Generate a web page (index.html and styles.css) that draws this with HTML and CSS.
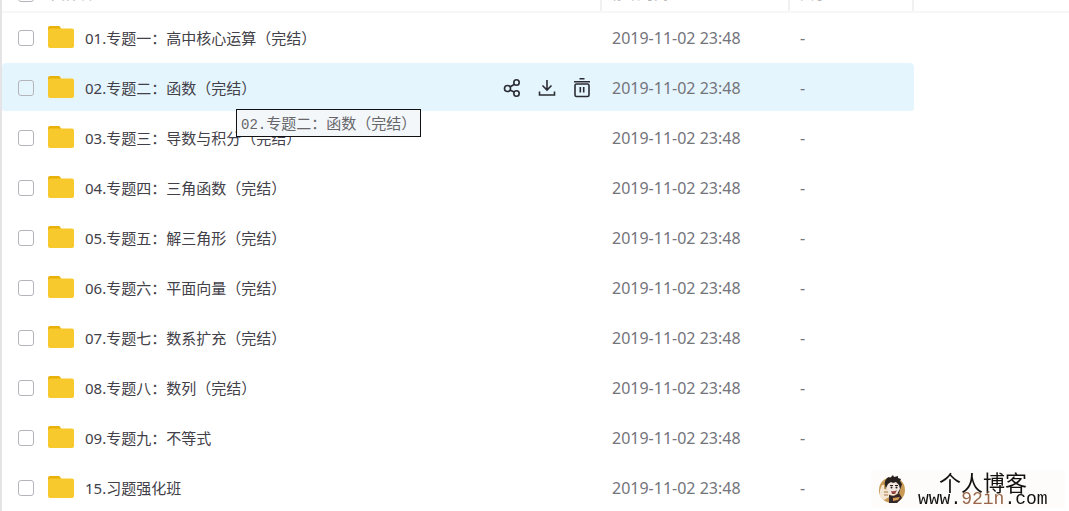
FILE: index.html
```html
<!DOCTYPE html>
<html lang="zh-CN">
<head>
<meta charset="utf-8">
<title>文件列表</title>
<link rel="stylesheet" href="styles.css">
</head>
<body>
<svg class="sprite" aria-hidden="true">
  <symbol id="folder" viewBox="0 0 26 22">
    <path d="M0 2a2 2 0 0 1 2-2h8.500a2 2 0 0 1 1.700 1l1.300 2.500V8H0z" fill="#e8b10a"/>
    <rect y="2.500" width="26" height="19.500" rx="2" fill="#f8c92c"/>
  </symbol>
</svg>
<main class="files">
  <div class="head-clip">
    <div class="head">
      <label class="name"><input type="checkbox" class="check"><span class="head-name">文件名</span></label>
      <span class="date">修改时间</span>
      <span class="size">大小</span>
    </div>
  </div>
  <ul class="list" id="list"></ul>
</main>
<footer class="mark">
  <svg class="mascot" viewBox="0 0 28 32" aria-hidden="true">
    <ellipse cx="14" cy="17" rx="13" ry="13" fill="#c99a55"/>
    <path d="M7 12c-1-3 1-7 4-8l1 1 3-3 1 2 4-1v2l3 1-1 2 2 3-1 3-2 6H9z" fill="#26201f"/>
    <path d="M10 11l3-2 2 1 3-1 3 3 1 4-3 5-5 2-5-3-1-5z" fill="#f2e6e0"/>
    <path d="M12 12.500h3M17 12.500h3" stroke="#26201f" fill="none"/>
    <circle cx="13.500" cy="14.500" r="1" fill="#26201f"/><circle cx="18.500" cy="14.500" r="1" fill="#26201f"/>
    <path d="M13 18q3 1 6-1l-2 4-3 0z" fill="#94413a"/>
    <path d="M11 22l5 1 5-3 3 5-5 5-8 0z" fill="#34282a"/>
    <path d="M2 17l2-5 2 0v4l5 1v7l-5 3-4-3z" fill="#f4e6d2"/>
    <path d="M6 19h4M6 22h4" stroke="#a87945" fill="none"/>
    <path d="M15 25l7-1-2 3-5 1z" fill="#d89b52"/>
  </svg>
  <div class="mark-text"><span class="mark-name">个人博客</span><span class="mark-url">www.<b>92in</b>.com</span></div>
</footer>
<script src="app.js"></script>
</body>
</html>
```
FILE: styles.css
```css
* { box-sizing: border-box; }
body { margin: 0; background: #fff; color: #424048; font: 15px/20px "Noto Sans", "Noto Sans CJK SC", sans-serif; }
.sprite { position: absolute; width: 0; height: 0; }
.files { min-height: 100vh; overflow: hidden; border-left: 2px solid #e4e4e6; }
.head-clip { display: flex; align-items: flex-end; height: 13px; border-bottom: 2px solid #f7f7f8; }
.head, .row { display: grid; grid-template-columns: minmax(0, 598px) 188px 126px; align-items: center; width: 912px; max-width: 100%; }
.head { height: 34px; flex: none; }
.head > * { height: 34px; }
.head-name { margin-left: 17px; font-size: 14px; color: #b4b4ba; }
.list { list-style: none; margin: 0; padding: 0; }
.row { height: 50px; padding-top: 2px; border-bottom: 2px solid transparent; background-clip: padding-box; border-radius: 4px; position: relative; }
.row.active { background-color: #e4f5fe; }
.name { display: flex; align-items: center; padding-left: 16px; }
.check { appearance: none; flex: none; width: 16px; height: 16px; margin: 0; border: 1px solid #b4b5ba; border-radius: 3px; background: transparent; }
.folder { flex: none; width: 26px; height: 22px; margin: 0 11px 2px 14px; }
.title { white-space: nowrap; }
.date, .size { padding-left: 12px; color: #74747b; font-size: 16px; }
.head .date, .head .size { padding-left: 10px; border-left: 2px solid #f1f1f3; font-size: 14px; line-height: 34px; color: #b4b4ba; }
.head .size { border-right: 2px solid #f1f1f3; }
.actions { display: flex; gap: 15px; margin-left: auto; padding-right: 8px; }
.actions button { width: 20px; height: 20px; padding: 0; border: 0; background: none; color: #2b2c33; }
.actions svg { display: block; width: 20px; height: 20px; fill: none; stroke: currentColor; stroke-width: 1.600; }
.tip { position: absolute; z-index: 2; left: 234px; top: 46px; padding: 3px 4px; border: 1px solid #111; background: #f4f7fa; color: #66666a; white-space: nowrap; }
.tip-num { font-family: "Liberation Mono", monospace; font-size: 14px; line-height: 16px; }
.mark { position: fixed; right: 4px; bottom: 3px; display: flex; align-items: center; gap: 12px; width: 194px; height: 38px; padding-left: 7px; background: #fefcfa; color: #111; }
.mascot { flex: none; width: 28px; height: 32px; }
.mark-text { display: flex; flex-direction: column; }
.mark-name { font: 22px/20px "Noto Sans CJK SC", sans-serif; padding-left: 21px; }
.mark-url { font: 18px/16px "Liberation Mono", monospace; }
.mark-url b { font-weight: 400; color: #99664a; }
```
FILE: app.js
```js
const names = [
  "01.专题一：高中核心运算（完结）",
  "02.专题二：函数（完结）",
  "03.专题三：导数与积分（完结）",
  "04.专题四：三角函数（完结）",
  "05.专题五：解三角形（完结）",
  "06.专题六：平面向量（完结）",
  "07.专题七：数系扩充（完结）",
  "08.专题八：数列（完结）",
  "09.专题九：不等式",
  "15.习题强化班"
];
const actions = `<span class="actions">
<button aria-label="分享"><svg viewBox="0 0 20 20"><circle cx="5.500" cy="10.500" r="3"/><circle cx="14.500" cy="4.500" r="2.700"/><circle cx="14.500" cy="15.500" r="2.700"/><path d="M8 9l4-2.500M8 12l4 2"/></svg></button>
<button aria-label="下载"><svg viewBox="0 0 20 20"><path d="M10 2v10M5.500 7.500l4.500 4.500L14.500 7.500M2.500 13.500v3.500h15v-3.500"/></svg></button>
<button aria-label="删除"><svg viewBox="0 0 20 20"><path d="M7.500 .8h5M2 3.800h16M8.300 9v5.500M11.700 9v5.500"/><rect x="3" y="6" width="14" height="12.500" rx="1.500"/></svg></button></span>`;
document.getElementById("list").innerHTML = names.map((name, i) => `<li class="row${i === 1 ? " active" : ""}">
<label class="name"><input type="checkbox" class="check"><svg class="folder" aria-hidden="true"><use href="#folder"/></svg><span class="title">${name}</span>${i === 1 ? actions : ""}</label>
<time class="date">2019-11-02 23:48</time><span class="size">-</span>
${i === 1 ? `<div class="tip" role="tooltip"><span class="tip-num">02.</span>专题二：函数（完结）</div>` : ""}</li>`).join("");
```
